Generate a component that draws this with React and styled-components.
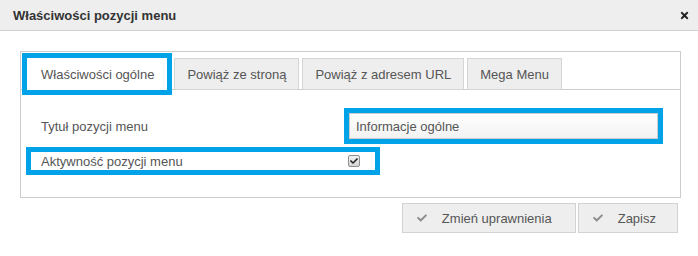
import React from 'react';
import styled, { createGlobalStyle, css } from 'styled-components';
import { FaCheck, FaTimes } from 'react-icons/fa';

const GlobalStyle = createGlobalStyle`
  body {
    margin: 0;
    background: #fff;
    font-family: "Liberation Sans", Arial, sans-serif;
    font-size: 13px;
    color: #555;
  }
`;

const highlight = css`
  outline: 5px solid #00a2e8;
`;

const Dialog = styled.div`
  width: 698px;
  height: 256px;
  background: #fff;
`;

const Header = styled.div`
  display: flex;
  align-items: center;
  justify-content: space-between;
  height: 30px;
  padding: 0 8px 0 13px;
  background: #eeeeee;
  border-bottom: 1px solid #d2d2d2;
`;

const Title = styled.h1`
  margin: 0;
  font-size: 13px;
  font-weight: bold;
  color: #333;
`;

const CloseButton = styled.button`
  display: flex;
  align-items: center;
  padding: 0;
  border: none;
  background: none;
  color: #222;
  cursor: pointer;
`;

const Body = styled.div`
  padding: 20px 17px 0 20px;
`;

const Panel = styled.div`
  border: 1px solid #cccccc;
`;

const TabBar = styled.div`
  display: flex;
  gap: 3px;
  padding: 6px 6px 0;
  border-bottom: 1px solid #cccccc;
`;

const Tab = styled.div`
  display: flex;
  align-items: center;
  height: 30px;
  margin-bottom: -1px;
  padding: 0 12px;
  border: 1px solid #d5d5d5;
  background: ${(p) => (p.$active ? '#fff' : '#eeeeee')};
  color: #555;
  white-space: nowrap;
  ${(p) => p.$active && css`
    border-color: #fff;
    padding: 0 12px 0 13px;
    margin-right: 4px;
    ${highlight}
  `}
`;

const Form = styled.div`
  display: flex;
  flex-direction: column;
  gap: 13px;
  padding: 23px 10px 27px;
`;

const Row = styled.div`
  display: flex;
  align-items: center;
  height: ${(p) => (p.$compact ? '18px' : '26px')};
  width: ${(p) => (p.$compact ? '344px' : 'auto')};
  ${(p) => p.$marked && highlight}
`;

const Label = styled.label`
  width: 307px;
  padding-left: 10px;
  color: #555;
`;

const TextInput = styled.input`
  box-sizing: border-box;
  width: 309px;
  height: 26px;
  margin-left: 1px;
  padding: 0 6px;
  border: 1px solid #ccc;
  background: linear-gradient(#ffffff, #f2f2f2);
  font-family: inherit;
  font-size: 13px;
  color: #555;
  ${highlight}
`;

const CheckBox = styled.span`
  display: flex;
  align-items: center;
  justify-content: center;
  box-sizing: border-box;
  width: 12px;
  height: 12px;
  border: 1px solid #8f8f8f;
  border-radius: 2px;
  background: linear-gradient(#f2f2f2, #d4d4d4);
  color: #222;
`;

const Actions = styled.div`
  display: flex;
  justify-content: flex-end;
  gap: 2px;
  margin-top: 5px;
  padding-right: 3px;
`;

const Button = styled.button`
  display: flex;
  align-items: center;
  gap: 15px;
  height: 30px;
  padding: 0 ${(p) => p.$padRight}px 0 14px;
  border: 1px solid #d2d2d2;
  background: #eeeeee;
  font-family: inherit;
  font-size: 13px;
  color: #555;
  cursor: pointer;
  svg {
    color: #8c8c8c;
  }
`;

export default function App() {
  return (
    <>
      <GlobalStyle />
      <Dialog>
        <Header>
          <Title>Właściwości pozycji menu</Title>
          <CloseButton aria-label="Zamknij">
            <FaTimes size={11} />
          </CloseButton>
        </Header>
        <Body>
          <Panel>
            <TabBar>
              <Tab $active>Właściwości ogólne</Tab>
              <Tab>Powiąż ze stroną</Tab>
              <Tab>Powiąż z adresem URL</Tab>
              <Tab>Mega Menu</Tab>
            </TabBar>
            <Form>
              <Row>
                <Label>Tytuł pozycji menu</Label>
                <TextInput defaultValue="Informacje ogólne" />
              </Row>
              <Row $compact $marked>
                <Label>Aktywność pozycji menu</Label>
                <CheckBox>
                  <FaCheck size={8} />
                </CheckBox>
              </Row>
            </Form>
          </Panel>
          <Actions>
            <Button $padRight={23}>
              <FaCheck size={10} />
              Zmień uprawnienia
            </Button>
            <Button $padRight={21}>
              <FaCheck size={10} />
              Zapisz
            </Button>
          </Actions>
        </Body>
      </Dialog>
    </>
  );
}
